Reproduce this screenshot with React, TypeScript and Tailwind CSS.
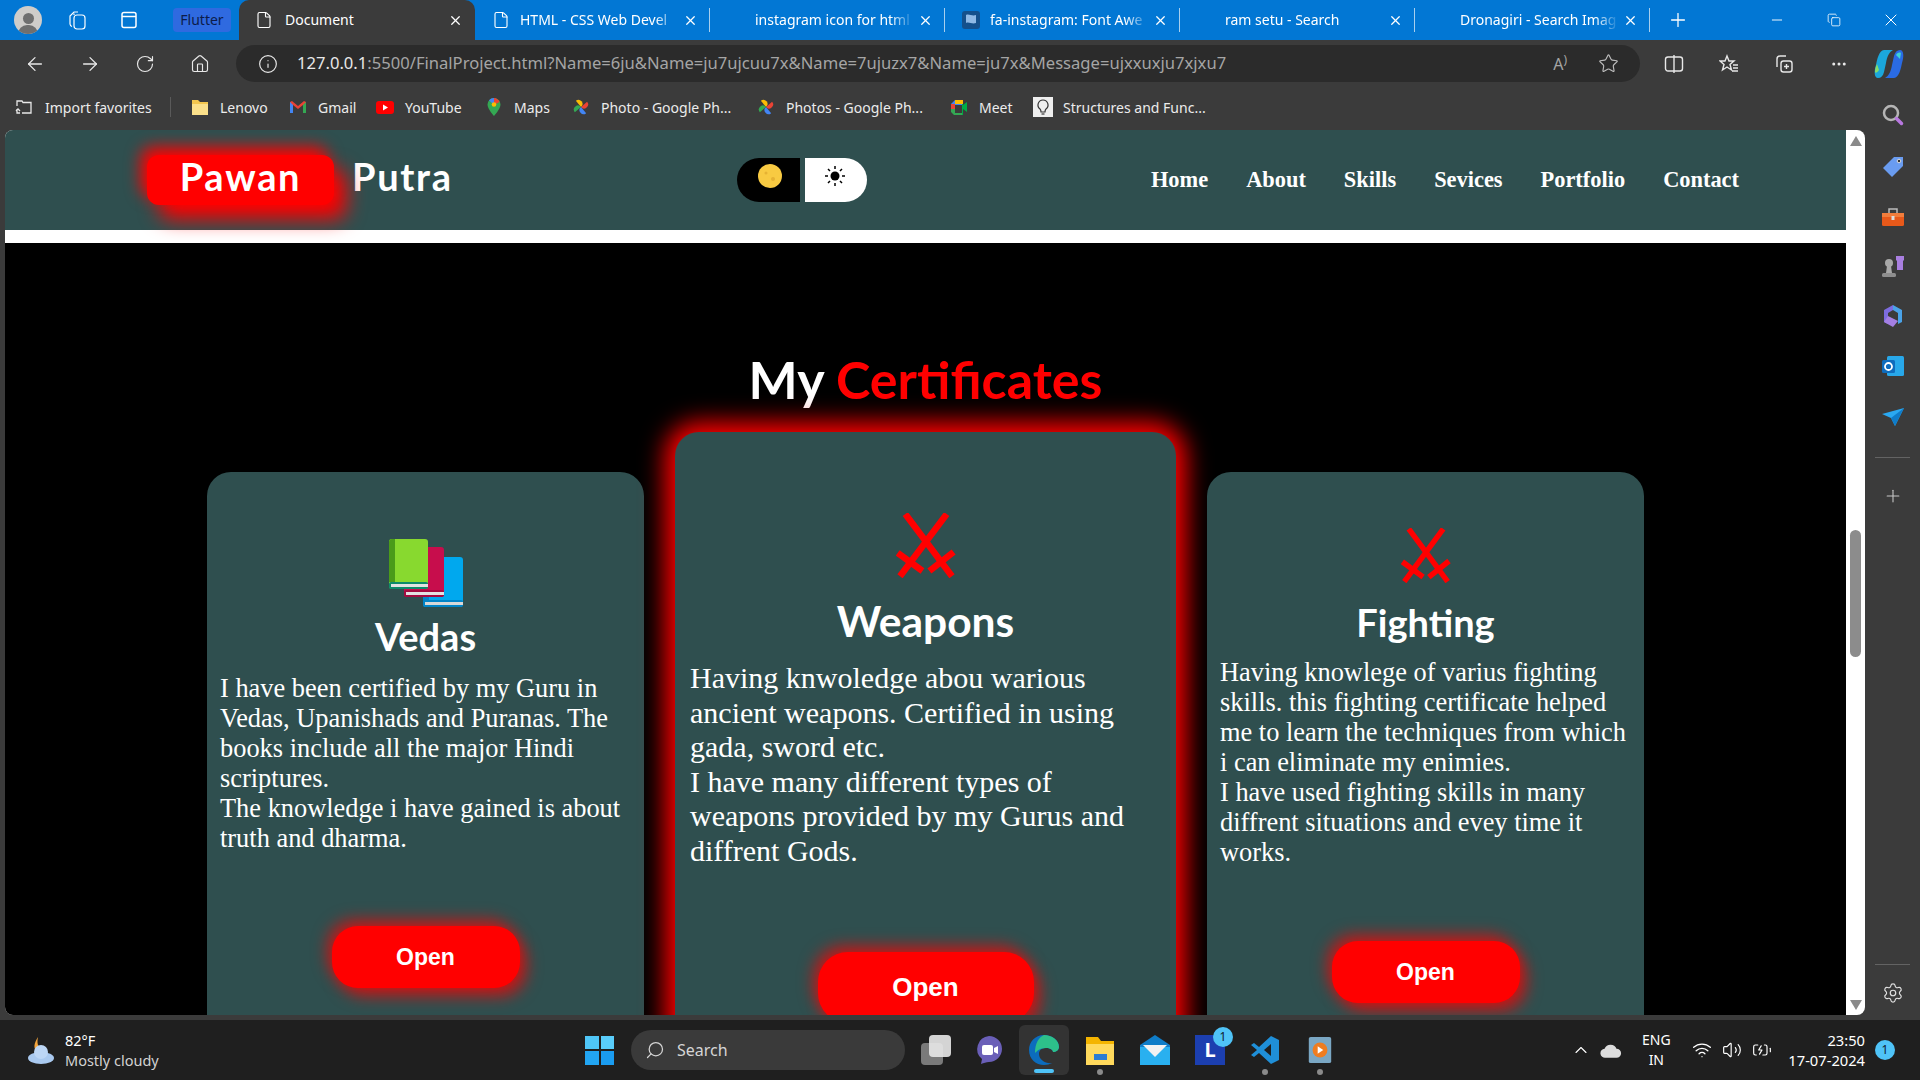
// Certificates page inside an Edge window on Windows 11
import React from 'react';
import {
  ArrowLeft, ArrowRight, RotateCw, Home, Info, Star, X, Plus, Minus, Settings,
  ChevronUp, Wifi, Volume2, File, MoreHorizontal, Copy, BatteryCharging, Search as Lens,
} from 'lucide-react';

const sans = 'font-["Noto_Sans","Open_Sans",sans-serif]';
const heading = 'font-["Lato","Noto_Sans",sans-serif]';
const serif = 'font-["Liberation_Serif",serif]';

const tabs = [
  { title: 'HTML - CSS Web Devel', icon: 'file' },
  { title: 'instagram icon for html', icon: 'none' },
  { title: 'fa-instagram: Font Awe', icon: 'flag' },
  { title: 'ram setu - Search', icon: 'none' },
  { title: 'Dronagiri - Search Imag', icon: 'none' },
];

const Pinwheel = () => (
  <svg viewBox="0 0 20 20" className="w-5 h-5">
    <path d="M10 10V2a4 4 0 0 1 0 8z" fill="#fbbc04" transform="rotate(-40 10 10)" />
    <path d="M10 10V2a4 4 0 0 1 0 8z" fill="#ea4335" transform="rotate(50 10 10)" />
    <path d="M10 10V2a4 4 0 0 1 0 8z" fill="#4285f4" transform="rotate(140 10 10)" />
    <path d="M10 10V2a4 4 0 0 1 0 8z" fill="#34a853" transform="rotate(230 10 10)" />
  </svg>
);

const favorites = [
  {
    label: 'Lenovo', width: 'w-[98px]',
    icon: (
      <svg viewBox="0 0 20 20" className="w-5 h-5">
        <path d="M2 3h6l2 2h8v13H2z" fill="#f3c64e" />
        <path d="M2 7h16v11H2z" fill="#fbe08a" />
      </svg>
    ),
  },
  {
    label: 'Gmail', width: 'w-[87px]',
    icon: (
      <svg viewBox="0 0 20 20" className="w-5 h-5">
        <path d="M2 5v11h3V8l5 4 5-4v8h3V5l-2-1-6 5-6-5z" fill="#ea4335" />
        <path d="M2 5v11h3V8z" fill="#4285f4" />
        <path d="M15 8v8h3V5z" fill="#34a853" />
      </svg>
    ),
  },
  {
    label: 'YouTube', width: 'w-[109px]',
    icon: (
      <svg viewBox="0 0 20 20" className="w-5 h-5">
        <rect x="1" y="4" width="18" height="13" rx="3" fill="#ff0000" />
        <path d="M8 7.500v6l5-3z" fill="#fff" />
      </svg>
    ),
  },
  {
    label: 'Maps', width: 'w-[87px]',
    icon: (
      <svg viewBox="0 0 20 20" className="w-5 h-5">
        <path d="M10 1a6.500 6.500 0 0 0-6.500 6.500C3.500 12 10 19 10 19s6.500-7 6.500-11.500A6.500 6.500 0 0 0 10 1z" fill="#34a853" />
        <path d="M10 1a6.500 6.500 0 0 0-5 2.300L10 8z" fill="#4285f4" />
        <path d="M10 1v7l5.500-3A6.500 6.500 0 0 0 10 1z" fill="#ea4335" />
        <circle cx="10" cy="7.500" r="2.300" fill="#fbbc04" />
      </svg>
    ),
  },
  { label: 'Photo - Google Ph...', width: 'w-[185px]', icon: <Pinwheel /> },
  { label: 'Photos - Google Ph...', width: 'w-[193px]', icon: <Pinwheel /> },
  {
    label: 'Meet', width: 'w-[84px]',
    icon: (
      <svg viewBox="0 0 20 20" className="w-5 h-5">
        <path d="M2 7l4-4h8v5H6v4H2z" fill="#4285f4" />
        <path d="M2 12h4v4h8v2H5l-3-3z" fill="#34a853" />
        <path d="M14 3v5l4-3v10l-4-3v6h-1V3z" fill="#00ac47" />
        <path d="M6 3h8v4H6z" fill="#fbbc04" />
        <path d="M2 7h4v5H2z" fill="#ea4335" />
      </svg>
    ),
  },
  {
    label: 'Structures and Func...', width: 'w-[190px]',
    icon: (
      <svg viewBox="0 0 20 20" className="w-5 h-5">
        <rect width="20" height="20" fill="#eeeeee" />
        <path d="M10 3a5 5 0 0 0-3 9c.7.600 1 1.500 1 3h4c0-1.500.3-2.400 1-3a5 5 0 0 0-3-9z" fill="none" stroke="#333" strokeWidth="1.200" />
        <path d="M8.500 17h3" stroke="#333" strokeWidth="1.200" />
      </svg>
    ),
  },
];

const Swords = ({ className }: { className: string }) => (
  <svg viewBox="0 0 60 65" preserveAspectRatio="none" className={className}>
    <g stroke="#ff0000" strokeWidth="6.500" fill="none">
      <path d="M9.300 1 56 63.300" />
      <path d="M50.700 1 4 63.300" />
      <path d="M1.700 40 26.500 58" />
      <path d="M57.600 39 33.400 58" />
    </g>
  </svg>
);

const Books = () => (
  <svg viewBox="0 0 74 68" className="w-[74px] h-[68px]">
    <rect x="34" y="18" width="40" height="50" rx="3" fill="#00a8ee" />
    <path d="M34 18h6v44h-6z" fill="#0284c7" />
    <rect x="34" y="61" width="40" height="7" rx="2" fill="#0284c7" />
    <rect x="36" y="63" width="38" height="3" fill="#d8d8d8" />
    <rect x="15" y="8" width="40" height="50" rx="3" fill="#c70d4c" />
    <rect x="15" y="51" width="40" height="7" rx="2" fill="#a30c40" />
    <rect x="17" y="53" width="38" height="3" fill="#e2e2e2" />
    <rect x="0" y="0" width="39" height="50" rx="3" fill="#88d92f" />
    <path d="M3 0h3v43H0V3a3 3 0 0 1 3-3z" fill="#4a9b1a" />
    <rect x="0" y="43" width="39" height="7" rx="2" fill="#0e8a6a" />
    <rect x="2" y="45" width="37" height="3" fill="#e2e2e2" />
  </svg>
);

const TabBar = () => (
  <div className={`h-10 bg-[#0277d4] flex items-center text-white shrink-0 ${sans}`}>
    <div className="w-[56px] flex justify-center">
      <div className="w-7 h-7 rounded-full bg-[#cfcdca] overflow-hidden flex flex-col items-center justify-end">
        <div className="w-[11px] h-[11px] rounded-full bg-[#6f6f6f] mb-px" />
        <div className="w-5 h-[9px] rounded-t-full bg-[#6f6f6f]" />
      </div>
    </div>
    <div className="w-[42px] flex justify-center">
      <svg viewBox="0 0 20 20" className="w-5 h-5" fill="none" stroke="#fff" strokeWidth="1.200">
        <rect x="7" y="5" width="11" height="14" rx="3" />
        <path d="M5 16.500A3 3 0 0 1 3 14V6l4-4h4" />
        <path d="M7 3.500V5" />
      </svg>
    </div>
    <div className="w-[62px] flex justify-center">
      <svg viewBox="0 0 20 20" className="w-5 h-5" fill="none" stroke="#fff" strokeWidth="1.500">
        <rect x="3" y="2.500" width="14" height="15" rx="2" />
        <path d="M3 6.500h14" />
      </svg>
    </div>
    <div className="w-[58px] ml-[13px] h-6 bg-[#2f6ae0] rounded-sm text-[#0c1c4a] text-sm flex items-center justify-center">Flutter</div>
    <div className="w-[236px] h-10 ml-2 bg-[#3b3b3b] rounded-t-[10px] flex items-center pl-4 pr-3 text-sm">
      <File size={18} strokeWidth={1.5} />
      <span className="ml-3 flex-1">Document</span>
      <X size={15} />
    </div>
    {tabs.map((tab) => (
      <div key={tab.title} className="w-[235px] h-10 flex items-center pl-4 pr-3 text-sm relative">
        <div className="w-[20px] h-5 shrink-0 flex items-center justify-center">
          {tab.icon === 'file' && <File size={18} strokeWidth={1.5} />}
          {tab.icon === 'flag' && (
            <svg viewBox="0 0 18 18" className="w-[18px] h-[18px]">
              <rect width="18" height="18" rx="3" fill="#14508c" />
              <path d="M4 4c3-1.500 6 1.500 10 0v8c-4 1.500-7-1.500-10 0z" fill="#8fb9e6" />
            </svg>
          )}
        </div>
        <span className="ml-[9px] flex-1 whitespace-nowrap [mask-image:linear-gradient(to_right,black_85%,transparent)]">{tab.title}</span>
        <X size={15} className="ml-1 shrink-0" />
        <div className="absolute right-0 top-2 w-px h-6 bg-[#a8cfee]" />
      </div>
    ))}
    <Plus size={22} strokeWidth={1.4} className="ml-[17px]" />
    <Minus size={16} strokeWidth={1.4} className="ml-[80px]" />
    <Copy size={14} strokeWidth={1.4} className="ml-[42px]" />
    <X size={20} strokeWidth={1.2} className="ml-[40px]" />
  </div>
);

const Toolbar = () => (
  <div className="h-[46px] bg-[#3b3b3b] flex items-start pt-[5px] text-[#e8e8e8] shrink-0">
    <div className="w-[236px] h-[37px] flex items-center">
      <ArrowLeft size={22} strokeWidth={1.4} className="ml-6" />
      <ArrowRight size={22} strokeWidth={1.4} className="ml-[33px]" />
      <RotateCw size={20} strokeWidth={1.4} className="ml-[34px]" />
      <Home size={20} strokeWidth={1.4} className="ml-[35px]" />
    </div>
    <div className={`w-[1404px] h-[37px] rounded-full bg-[#2b2b2b] flex items-center pl-[22px] pr-[21px] text-[16.600px] whitespace-nowrap ${sans}`}>
      <Info size={20} strokeWidth={1.4} />
      <span className="ml-[19px]">127.0.0.1</span>
      <span className="text-[#a5a5a5]">:5500/FinalProject.html?Name=6ju&amp;Name=ju7ujcuu7x&amp;Name=7ujuzx7&amp;Name=ju7x&amp;Message=ujxxuxju7xjxu7</span>
      <span className="ml-auto text-[#a5a5a5] text-base mr-[31px]">A<sup>)</sup></span>
      <Star size={21} strokeWidth={1.3} className="text-[#bdbdbd]" />
    </div>
    <div className="flex-1 h-[37px] flex items-center">
      <svg viewBox="0 0 20 20" className="w-5 h-5 ml-[24px]" fill="none" stroke="#e8e8e8" strokeWidth="1.400">
        <rect x="1.500" y="3" width="17" height="14" rx="2.500" />
        <path d="M10 1v18" />
      </svg>
      <svg viewBox="0 0 20 20" className="w-5 h-5 ml-[35px]" fill="none" stroke="#e8e8e8" strokeWidth="1.400">
        <path d="M8 2l2 5h5l-4 3.500 1.500 5.500L8 13l-4.500 3L5 10.500 1 7h5z" />
        <path d="M14 11h5M14 14h5M13 17h6" />
      </svg>
      <svg viewBox="0 0 20 20" className="w-5 h-5 ml-[35px]" fill="none" stroke="#e8e8e8" strokeWidth="1.400">
        <path d="M3 13V5a3 3 0 0 1 3-3h6" />
        <rect x="7" y="7" width="11" height="11" rx="2.500" />
        <path d="M12.500 10v5M10 12.500h5" />
      </svg>
      <MoreHorizontal size={18} className="ml-[36px]" />
      <svg viewBox="0 0 32 32" className="w-8 h-8 ml-[25px]">
        <path d="M11 2h9c-4 2-6 7-7 13l-2 9c-1 4-3 6-6 6-4 0-4-7-2-13 1-5 3-15 8-15z" fill="#1ba7dc" />
        <path d="M21 30h-9c4-2 6-7 7-13l2-9c1-4 3-6 6-6 4 0 4 7 2 13-1 5-3 15-8 15z" fill="#2a6be4" />
        <path d="M6 22c-2 3-4 4-4 1 0-2 1-5 2-7z" fill="#86dc6a" />
        <path d="M28 5c-2-1-4 0-5 2l4 4z" fill="#3ed3d3" />
      </svg>
    </div>
  </div>
);

const FavoritesBar = () => (
  <div className={`h-11 pb-[2px] flex items-center text-[14px] text-[#ececec] ${sans}`}>
    <div className="w-[170px] flex items-center pl-[14px] h-5">
      <svg viewBox="0 0 20 20" className="w-5 h-5" fill="none" stroke="#e8e8e8" strokeWidth="1.300">
        <path d="M3 9V4h5l1 1.500h8V16H8M3 12v4h3M2 14l2-2 2 2" />
      </svg>
      <span className="ml-[11px]">Import favorites</span>
    </div>
    <div className="w-px h-5 bg-[#5a5a5a] mr-[19px]" />
    {favorites.map((fav) => (
      <div key={fav.label} className={`${fav.width} flex items-center gap-[10px] whitespace-nowrap`}>
        {fav.icon}
        <span>{fav.label}</span>
      </div>
    ))}
  </div>
);

const Navbar = () => (
  <nav className="h-[100px] bg-[#2f4f4f] flex items-center justify-between pl-[142px] pr-[107px] shrink-0">
    <div className={`flex items-center text-white text-[38px] leading-none tracking-[1.700px] font-bold ${heading}`}>
      <div className="w-[187px] h-[50px] pb-[9px] rounded-[12px] bg-[#ff0000] flex items-center justify-center shadow-[-6px_-8px_16px_#ff0000,12px_14px_20px_#ff0000] relative z-10">
        Pawan
      </div>
      <span className="ml-[18px] pb-[9px]">Putra</span>
    </div>
    <div className="flex items-center gap-[5px] h-11">
      <div className="w-[63px] h-11 rounded-l-full bg-black flex justify-center items-start pt-[6px] pl-[3px]">
        <svg viewBox="0 0 24 24" className="w-6 h-6">
          <circle cx="12" cy="12" r="12" fill="#f8ca42" />
          <circle cx="8" cy="9" r="1.500" fill="#e6b233" />
          <circle cx="15" cy="15" r="2" fill="#e6b233" />
        </svg>
      </div>
      <div className="w-[62px] h-11 rounded-r-full bg-white flex justify-center items-start pt-[8px] pr-[2px]">
        <svg viewBox="0 0 20 20" className="w-5 h-5" stroke="#000" strokeWidth="1.500">
          <circle cx="10" cy="10" r="4.500" fill="#000" stroke="none" />
          <path d="M10 0v3M10 17v3M0 10h3M17 10h3M3 3l2 2M15 15l2 2M17 3l-2 2M5 15l-2 2" />
        </svg>
      </div>
    </div>
    <ul className={`flex items-center gap-[38px] pb-px text-white font-bold text-[22.400px] ${serif}`}>
      {['Home', 'About', 'Skills', 'Sevices', 'Portfolio', 'Contact'].map((link) => (
        <li key={link}>{link}</li>
      ))}
    </ul>
  </nav>
);

const CertCard = ({ boxClass, icon, title, titleClass, textClass, lines, buttonClass }: {
  boxClass: string;
  icon: React.ReactNode;
  title: string;
  titleClass: string;
  textClass: string;
  lines: string[];
  buttonClass: string;
}) => (
  <div className={`bg-[#2f4f4f] rounded-[24px] flex flex-col items-center shrink-0 ${boxClass}`}>
    {icon}
    <h3 className={`text-white font-bold ${heading} ${titleClass}`}>{title}</h3>
    <div className={`w-full text-white whitespace-nowrap ${serif} ${textClass}`}>
      {lines.map((line) => <div key={line}>{line}</div>)}
    </div>
    <button className={`bg-[#ff0000] text-white font-bold font-["Liberation_Sans",sans-serif] flex items-center justify-center shadow-[-4px_-6px_16px_rgba(255,0,0,0.7),6px_8px_16px_rgba(255,0,0,0.7)] ${buttonClass}`}>
      Open
    </button>
  </div>
);

const Certificates = () => (
  <section className="flex-1 min-h-0 bg-black overflow-hidden">
    <h2 className={`text-center text-[52px] leading-[60px] font-bold mt-[106px] text-white ${heading}`}>
      My <span className="text-[#ff0000]">Certificates</span>
    </h2>
    <div className="flex justify-center items-center gap-[31px] h-[700px] mt-[23px]">
      <CertCard
        boxClass="w-[437px] h-[620px] pt-[67px] px-[13px]"
        icon={<Books />}
        title="Vedas"
        titleClass="text-[38px] leading-[44px] mt-[7px]"
        textClass="text-[26.400px] leading-[30px] mt-[15px]"
        lines={[
          'I have been certified by my Guru in',
          'Vedas, Upanishads and Puranas. The',
          'books include all the major Hindi',
          'scriptures.',
          'The knowledge i have gained is about',
          'truth and dharma.',
        ]}
        buttonClass="w-[188px] h-[62px] rounded-[26px] text-[23px] mt-[73px]"
      />
      <CertCard
        boxClass="w-[501px] h-[700px] pt-[81px] px-[15px] shadow-[0_0_24px_10px_#ff0000]"
        icon={<Swords className="w-[60px] h-[65px]" />}
        title="Weapons"
        titleClass="text-[42.500px] leading-[50px] mt-[18px]"
        textClass="text-[30px] leading-[34.500px] mt-[15px]"
        lines={[
          'Having knwoledge abou warious',
          'ancient weapons. Certified in using',
          'gada, sword etc.',
          'I have many different types of',
          'weapons provided by my Gurus and',
          'diffrent Gods.',
        ]}
        buttonClass="w-[216px] h-[71px] rounded-[30px] text-[26px] mt-[84px]"
      />
      <CertCard
        boxClass="w-[437px] h-[620px] pt-[56px] px-[13px]"
        icon={<Swords className="w-[50px] h-[55px]" />}
        title="Fighting"
        titleClass="text-[38px] leading-[44px] mt-[17px]"
        textClass="text-[26.400px] leading-[30px] mt-[13px]"
        lines={[
          'Having knowlege of varius fighting',
          'skills. this fighting certificate helped',
          'me to learn the techniques from which',
          'i can eliminate my enimies.',
          'I have used fighting skills in many',
          'diffrent situations and evey time it',
          'works.',
        ]}
        buttonClass="w-[188px] h-[62px] rounded-[26px] text-[23px] mt-[74px]"
      />
    </div>
  </section>
);

const Scrollbar = () => (
  <div className="w-[19px] bg-white rounded-r-[8px] flex flex-col items-center shrink-0">
    <svg viewBox="0 0 12 10" className="w-3 h-[10px] mt-[6px]"><path d="M6 0l6 10H0z" fill="#8a8a8a" /></svg>
    <div className="w-[11px] h-[127px] rounded-full bg-[#8c8c8c] mt-[384px]" />
    <svg viewBox="0 0 12 10" className="w-3 h-[10px] mt-auto mb-[5px]"><path d="M6 10L0 0h12z" fill="#8a8a8a" /></svg>
  </div>
);

const SidePanel = () => (
  <aside className="w-[55px] bg-[#3b3b3b] flex flex-col items-center pt-[17px] shrink-0">
    <svg viewBox="0 0 24 24" className="w-6 h-6" fill="none">
      <circle cx="10" cy="10" r="7" stroke="#b5b5b5" strokeWidth="2.500" />
      <path d="M15.500 15.500l5 5" stroke="#b878e0" strokeWidth="3.500" strokeLinecap="round" />
    </svg>
    <svg viewBox="0 0 24 24" className="w-6 h-6 mt-[28px]">
      <path d="M13 2h9v9L11 22 2 13z" fill="#6a9cf0" />
      <circle cx="18" cy="6" r="1.800" fill="#333" stroke="#ddd" />
    </svg>
    <svg viewBox="0 0 24 24" className="w-6 h-6 mt-[27px]">
      <path d="M8 7V3h8v4" fill="none" stroke="#bbb" strokeWidth="1.500" />
      <rect x="1" y="7" width="22" height="13" rx="1.500" fill="#e8591a" />
      <rect x="1" y="7" width="22" height="4" fill="#f27d3c" />
      <rect x="10.500" y="10" width="3" height="4" fill="#ddd" />
    </svg>
    <svg viewBox="0 0 24 24" className="w-6 h-6 mt-[24px]">
      <path d="M15 2h8v4l-1 1v9h-6V7l-1-1z" fill="#a97fe0" />
      <circle cx="8" cy="9" r="4" fill="#a8a8a8" />
      <path d="M6 12h4l1 7H5z" fill="#a8a8a8" />
      <rect x="1" y="19" width="14" height="4" rx="1.500" fill="#8e8e8e" />
    </svg>
    <svg viewBox="0 0 24 24" className="w-6 h-6 mt-[26px]">
      <path d="M12 1l9 5v12l-4 2V9l-5-3z" fill="#4aa3e8" />
      <path d="M3 6l9-5v5L7 9v11L3 18z" fill="#7d6ce0" />
      <path d="M7 12l10 5-5 6-9-5z" fill="#a47fe3" />
    </svg>
    <svg viewBox="0 0 24 24" className="w-6 h-6 mt-[26px]">
      <rect x="6" y="2" width="17" height="20" rx="1.500" fill="#28a8ea" />
      <rect x="1" y="6" width="13" height="13" rx="1.500" fill="#0f6cbd" />
      <circle cx="7.500" cy="12.500" r="3.500" fill="none" stroke="#fff" strokeWidth="1.800" />
    </svg>
    <svg viewBox="0 0 24 24" className="w-6 h-6 mt-[27px]">
      <path d="M1 9l22-6-9 18-4-8z" fill="#2aa9f2" />
      <path d="M10 13l13-10-9 18z" fill="#0f7cc9" />
    </svg>
    <div className="w-[35px] h-px bg-[#636363] mt-[28px]" />
    <Plus size={20} strokeWidth={1.300} className="text-[#c8c8c8] mt-[28px]" />
    <div className="w-[35px] h-px bg-[#636363] mt-auto" />
    <Settings size={22} strokeWidth={1.300} className="text-[#e0e0e0] mt-[17px] mb-[16px]" />
  </aside>
);

const Taskbar = () => (
  <footer className={`h-[60px] bg-[#1f1f1f] flex items-center text-white shrink-0 ${sans}`}>
    <div className="w-[585px] flex items-center pl-[24px]">
      <svg viewBox="0 0 32 32" className="w-8 h-8">
        <path d="M14 3c-4 6-5 12-1 14l6-2c-6-1-6-7-5-12z" fill="#f3a43c" />
        <ellipse cx="17" cy="24" rx="13" ry="6" fill="#a9c9ef" />
        <circle cx="17" cy="18" r="7" fill="#bcd6f5" />
      </svg>
      <div className="ml-[9px] text-[14.500px] leading-5">
        <div>82°F</div>
        <div className="text-[#d2d2d2]">Mostly cloudy</div>
      </div>
    </div>
    <div className="grid grid-cols-2 gap-[2px] w-[29px] h-[29px]">
      <div className="bg-[#4fc6f7]" /><div className="bg-[#59cdfb]" /><div className="bg-[#22a5f2]" /><div className="bg-[#1a9cf0]" />
    </div>
    <div className="w-[274px] h-10 ml-[17px] rounded-full bg-[#3a3a3a] flex items-center pl-[14px] text-[16px] text-[#d5d5d5]">
      <Lens size={20} strokeWidth={1.500} className="-scale-x-100" />
      <span className="ml-3">Search</span>
    </div>
    <div className="w-[62px] flex justify-center">
      <div className="relative w-[30px] h-[30px]">
        <div className="absolute left-0 bottom-0 w-[22px] h-[22px] bg-[#7a7a7a] rounded-sm" />
        <div className="absolute right-0 top-0 w-[22px] h-[22px] bg-[#e8e8e8]/90 rounded-sm" />
      </div>
    </div>
    <div className="w-[52px] flex justify-center -ml-[4px] mr-[1px]">
      <svg viewBox="0 0 30 30" className="w-[30px] h-[30px]">
        <path d="M15 1a13 13 0 0 1 13 13c0 7-6 13-13 13-3 0-5 1-8 2l1-5a13 13 0 0 1 7-23z" fill="#6a5fb8" />
        <rect x="8" y="10" width="11" height="10" rx="2" fill="#fff" />
        <path d="M20 13l4-2v8l-4-2z" fill="#fff" />
      </svg>
    </div>
    <div className="w-[50px] h-[50px] mx-[3px] rounded-[6px] bg-[#333333] flex flex-col items-center justify-center relative">
      <svg viewBox="0 0 32 32" className="w-[32px] h-[32px]">
        <path d="M16 1C7 1 1 8 1 16c0 9 7 15 15 15 3 0 6-1 8-2-6 1-13-3-13-9 0-4 3-6 7-6s7 2 7 4c3 0 6-2 6-5C31 6 24 1 16 1z" fill="#0c6cbd" />
        <path d="M16 1c8 0 15 5 15 12 0 3-3 5-6 5 0-2-3-4-7-4-6 0-9 3-11 5C7 9 11 3 16 1z" fill="#2dc08a" />
      </svg>
      <div className="absolute bottom-[2px] w-5 h-[4px] rounded-full bg-[#4fc3f7]" />
    </div>
    <div className="w-[52px] ml-[2px] flex flex-col items-center relative">
      <svg viewBox="0 0 30 30" className="w-[30px] h-[30px]">
        <path d="M1 2h12l3 4h13v24H1z" fill="#f4b400" />
        <rect x="1" y="9" width="28" height="21" fill="#ffd95c" />
        <rect x="9" y="19" width="13" height="6" fill="#2b7cd3" />
      </svg>
      <div className="absolute -bottom-[10px] w-[6px] h-[6px] rounded-full bg-[#8a8a8a]" />
    </div>
    <div className="w-[58px] flex justify-center">
      <svg viewBox="0 0 30 30" className="w-[30px] h-[30px]">
        <path d="M0 10 15 0l15 10v20H0z" fill="#0f7dc8" />
        <path d="M0 12h30v18H0z" fill="#29b0f0" />
        <path d="M3 10h24L15 22z" fill="#f2f2f2" />
      </svg>
    </div>
    <div className="w-[52px] flex justify-center relative">
      <div className="w-[30px] h-[30px] bg-[#1c3fb0] text-white font-bold text-xl leading-[30px] text-center">L</div>
      <div className="absolute -top-[8px] right-[3px] w-[20px] h-[20px] rounded-full bg-[#4fc3f7] text-[#10202c] text-[12px] leading-[20px] text-center">1</div>
    </div>
    <div className="w-[58px] flex flex-col items-center relative">
      <svg viewBox="0 0 30 30" className="w-[30px] h-[30px]">
        <path d="M21 1l8 4v20l-8 4L9 18l-5 4-3-2 6-5-6-5 3-2 5 4z" fill="#1f8fd8" />
        <path d="M21 9v12l-7-6z" fill="#1f1f1f" />
      </svg>
      <div className="absolute -bottom-[10px] w-[6px] h-[6px] rounded-full bg-[#8a8a8a]" />
    </div>
    <div className="w-[52px] flex flex-col items-center relative">
      <svg viewBox="0 0 30 30" className="w-[28px] h-[30px]">
        <rect x="3" y="1" width="24" height="28" rx="2" fill="#7aa7c4" />
        <circle cx="15" cy="15" r="8" fill="#ee7d21" />
        <path d="M12.500 11v8l6-4z" fill="#fff" />
      </svg>
      <div className="absolute -bottom-[10px] w-[6px] h-[6px] rounded-full bg-[#8a8a8a]" />
    </div>
    <div className="flex-1 flex items-center justify-end pr-[25px] text-[14px]">
      <ChevronUp size={20} strokeWidth={1.300} />
      <svg viewBox="0 0 24 16" className="w-[22px] h-[15px] ml-[9px]"><path d="M6 16a5 5 0 0 1-1-10 7 7 0 0 1 13 0 5 5 0 0 1 0 10z" fill="#dcdcdc" /></svg>
      <div className="ml-[12px] w-[44px] text-center leading-5"><div>ENG</div><div>IN</div></div>
      <Wifi size={20} strokeWidth={1.600} className="ml-[14px]" />
      <Volume2 size={20} strokeWidth={1.400} className="ml-[10px]" />
      <BatteryCharging size={20} strokeWidth={1.400} className="ml-[10px]" />
      <div className="ml-[16px] text-right text-[14.700px] leading-5"><div>23:50</div><div>17-07-2024</div></div>
      <div className="ml-[10px] w-5 h-5 rounded-full bg-[#4fc3f7] text-[#10202c] text-[12px] leading-5 text-center">1</div>
    </div>
  </footer>
);

export default function App() {
  return (
    <div className="w-[1920px] h-[1080px] overflow-hidden flex flex-col bg-[#3b3b3b]">
      <TabBar />
      <Toolbar />
      <div className="flex-1 min-h-0 flex">
        <div className="flex-1 min-w-0 flex flex-col pb-[5px]">
          <FavoritesBar />
          <div className="flex-1 min-h-0 flex pl-[5px]">
            <main className="w-[1841px] flex flex-col overflow-hidden rounded-tl-[8px] rounded-bl-[8px] bg-white">
              <Navbar />
              <div className="h-[13px] bg-white shrink-0" />
              <Certificates />
            </main>
            <Scrollbar />
          </div>
        </div>
        <SidePanel />
      </div>
      <Taskbar />
    </div>
  );
}
